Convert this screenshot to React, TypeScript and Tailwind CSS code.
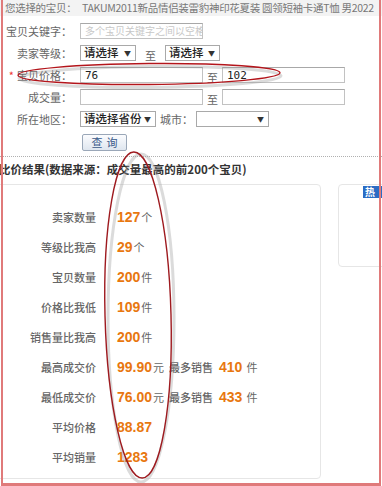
import React from 'react';

const cjk = { fontFamily: '"Noto Sans CJK SC", "Noto Sans", sans-serif' };
const num = { fontFamily: '"Liberation Sans", Arial, "Noto Sans CJK SC", sans-serif' };

interface Stat {
  label: string;
  value: string;
  unit?: string;
  extra?: { value: string; unit: string };
}

const stats: Stat[] = [
  { label: '卖家数量', value: '127', unit: '个' },
  { label: '等级比我高', value: '29', unit: '个' },
  { label: '宝贝数量', value: '200', unit: '件' },
  { label: '价格比我低', value: '109', unit: '件' },
  { label: '销售量比我高', value: '200', unit: '件' },
  { label: '最高成交价', value: '99.90', unit: '元', extra: { value: '410', unit: '件' } },
  { label: '最低成交价', value: '76.00', unit: '元', extra: { value: '433', unit: '件' } },
  { label: '平均价格', value: '88.87' },
  { label: '平均销量', value: '1283' },
];

const Select = ({ text, w }: { text: string; w: string }) => (
  <div className={`${w} shrink-0 h-[16px] border border-[#a9a9a9] bg-white flex items-center justify-between pl-[3px] pr-[4px] text-[11.5px] leading-none text-[#222] whitespace-nowrap`}>
    <span className="font-medium">{text}</span>
    <span className="text-[7px] text-[#333]">▼</span>
  </div>
);

const Input = ({ value, placeholder }: { value?: string; placeholder?: string }) => (
  <div className="w-[123px] shrink-0 h-[16px] border border-[#c2c2c2] border-t-[#a8a8a8] bg-white flex items-center px-[4px] text-[11px] leading-none overflow-hidden">
    {value ? (
      <span className="text-[#222]" style={{ fontFamily: '"DejaVu Sans Mono", monospace' }}>{value}</span>
    ) : (
      <span className="text-[#c8c8c8] whitespace-nowrap text-[10px]">{placeholder}</span>
    )}
  </div>
);

const Label = ({ children, star }: { children: React.ReactNode; star?: boolean }) => (
  <div className="w-[75px] shrink-0 text-right text-[11px] leading-none text-[#666] pr-[3px] whitespace-nowrap">
    {star && <span className="text-[#e33] mr-[3px]">*</span>}
    {children}
  </div>
);

const To = ({ cls }: { cls: string }) => (
  <span className={`text-[11px] leading-none text-[#666] pt-[4px] ${cls}`}>至</span>
);

export default function App() {
  return (
    <div className="relative w-[382px] h-[486px] overflow-hidden bg-white" style={cjk}>
      {/* top row */}
      <div className="h-[16px] bg-[#f3f3f3] flex items-center text-[10.5px] leading-none text-[#777] whitespace-nowrap pl-[5px] tracking-[-0.3px]">
        <span className="w-[77px] shrink-0">您选择的宝贝：</span>
        <span>TAKUM2011新品情侣装雷豹神印花夏装 圆领短袖卡通T恤 男2022</span>
      </div>

      {/* form */}
      <div className="flex flex-col gap-[6px] pt-[7px]">
        <div className="h-[16px] flex items-center gap-[5px]">
          <Label>宝贝关键字：</Label>
          <Input placeholder="多个宝贝关键字之间以空格" />
        </div>
        <div className="h-[16px] flex items-center gap-[5px]">
          <Label>卖家等级：</Label>
          <div className="flex items-center">
            <Select text="请选择" w="w-[56px]" />
            <To cls="mx-[9px]" />
            <Select text="请选择" w="w-[55px]" />
          </div>
        </div>
        <div className="h-[16px] flex items-center gap-[5px]">
          <Label star>宝贝价格：</Label>
          <div className="flex items-center">
            <Input value="76" />
            <To cls="mx-[4px]" />
            <Input value="102" />
          </div>
        </div>
        <div className="h-[16px] flex items-center gap-[5px]">
          <Label>成交量：</Label>
          <div className="flex items-center">
            <Input />
            <To cls="mx-[4px]" />
            <Input />
          </div>
        </div>
        <div className="h-[16px] flex items-center gap-[5px]">
          <Label>所在地区：</Label>
          <div className="flex items-center">
            <Select text="请选择省份" w="w-[76px]" />
            <span className="text-[11px] leading-none text-[#666] ml-[4px] mr-[3px] whitespace-nowrap">城市：</span>
            <Select text="" w="w-[73px]" />
          </div>
        </div>
        <div className="flex items-center pl-[82px] pt-[1px]">
          <div className="w-[45px] h-[17px] border border-[#9aa7b8] rounded-[2px] bg-gradient-to-b from-[#fbfcfe] to-[#dfe6ef] flex items-center justify-center text-[11px] leading-none text-[#3a5a8a] tracking-[4px] pl-[4px]">
            查询
          </div>
        </div>
      </div>

      <div className="mt-[5px] border-t border-dotted border-[#b0b0b0]" />

      {/* result heading */}
      <div className="pt-[4px] h-[27px] text-[11.5px] font-bold text-[#333] leading-[16px] whitespace-nowrap -ml-[1px]">
        比价结果(数据来源：成交量最高的前200个宝贝)
      </div>

      <div className="flex gap-[17px]">
        <div className="-ml-[6px] shrink-0 w-[327px] h-[295px] border border-[#e6e6e6] rounded-[4px] pt-[22px] flex flex-col">
          {stats.map((s) => (
            <div key={s.label} className="h-[30px] flex items-baseline whitespace-nowrap">
              <span className="w-[101px] text-right text-[11px] text-[#666] font-medium">{s.label}</span>
              <span className="ml-[21px] text-[14px] font-bold text-[#e8770f]" style={num}>{s.value}</span>
              {s.unit && <span className="text-[11px] text-[#666] ml-[1px]">{s.unit}</span>}
              {s.extra && (
                <>
                  <span className="ml-[5px] text-[11px] text-[#666] font-medium">最多销售</span>
                  <span className="ml-[6px] text-[14px] font-bold text-[#e8770f]" style={num}>{s.extra.value}</span>
                  <span className="ml-[4px] text-[11px] text-[#666]">{s.extra.unit}</span>
                </>
              )}
            </div>
          ))}
        </div>
        <div className="relative shrink-0 w-[60px] h-[83px] border border-[#e6e6e6] rounded-[4px]">
          <div className="absolute top-[1px] left-[24px] w-[20px] h-[12px] bg-[#2b6cc4] text-white text-[10px] leading-[12px] font-bold pl-[2px]">
            热
          </div>
        </div>
      </div>

      {/* hand-drawn annotations */}
      <svg className="absolute inset-0 pointer-events-none" width="382" height="486">
        <ellipse cx="149" cy="75" rx="131" ry="10.5" fill="none" stroke="#999" strokeOpacity="0.35" strokeWidth="3" transform="rotate(-0.5 149 75) translate(1 2)" />
        <ellipse cx="149" cy="74" rx="131" ry="10.5" fill="none" stroke="#b3151b" strokeWidth="1.4" transform="rotate(-0.5 149 74)" />
        <ellipse cx="139" cy="316" rx="33" ry="164" fill="none" stroke="#999" strokeOpacity="0.35" strokeWidth="3" transform="translate(2 2)" />
        <ellipse cx="138" cy="315" rx="33" ry="163" fill="none" stroke="#9e1a1f" strokeWidth="1.4" transform="rotate(-1.5 138 315)" />
      </svg>

      {/* outer red frame */}
      <div className="absolute inset-0 pointer-events-none border-l-2 border-r-2 border-b-[3px] border-[#e07a7a] ml-[1px] mr-[1px]" />
    </div>
  );
}
